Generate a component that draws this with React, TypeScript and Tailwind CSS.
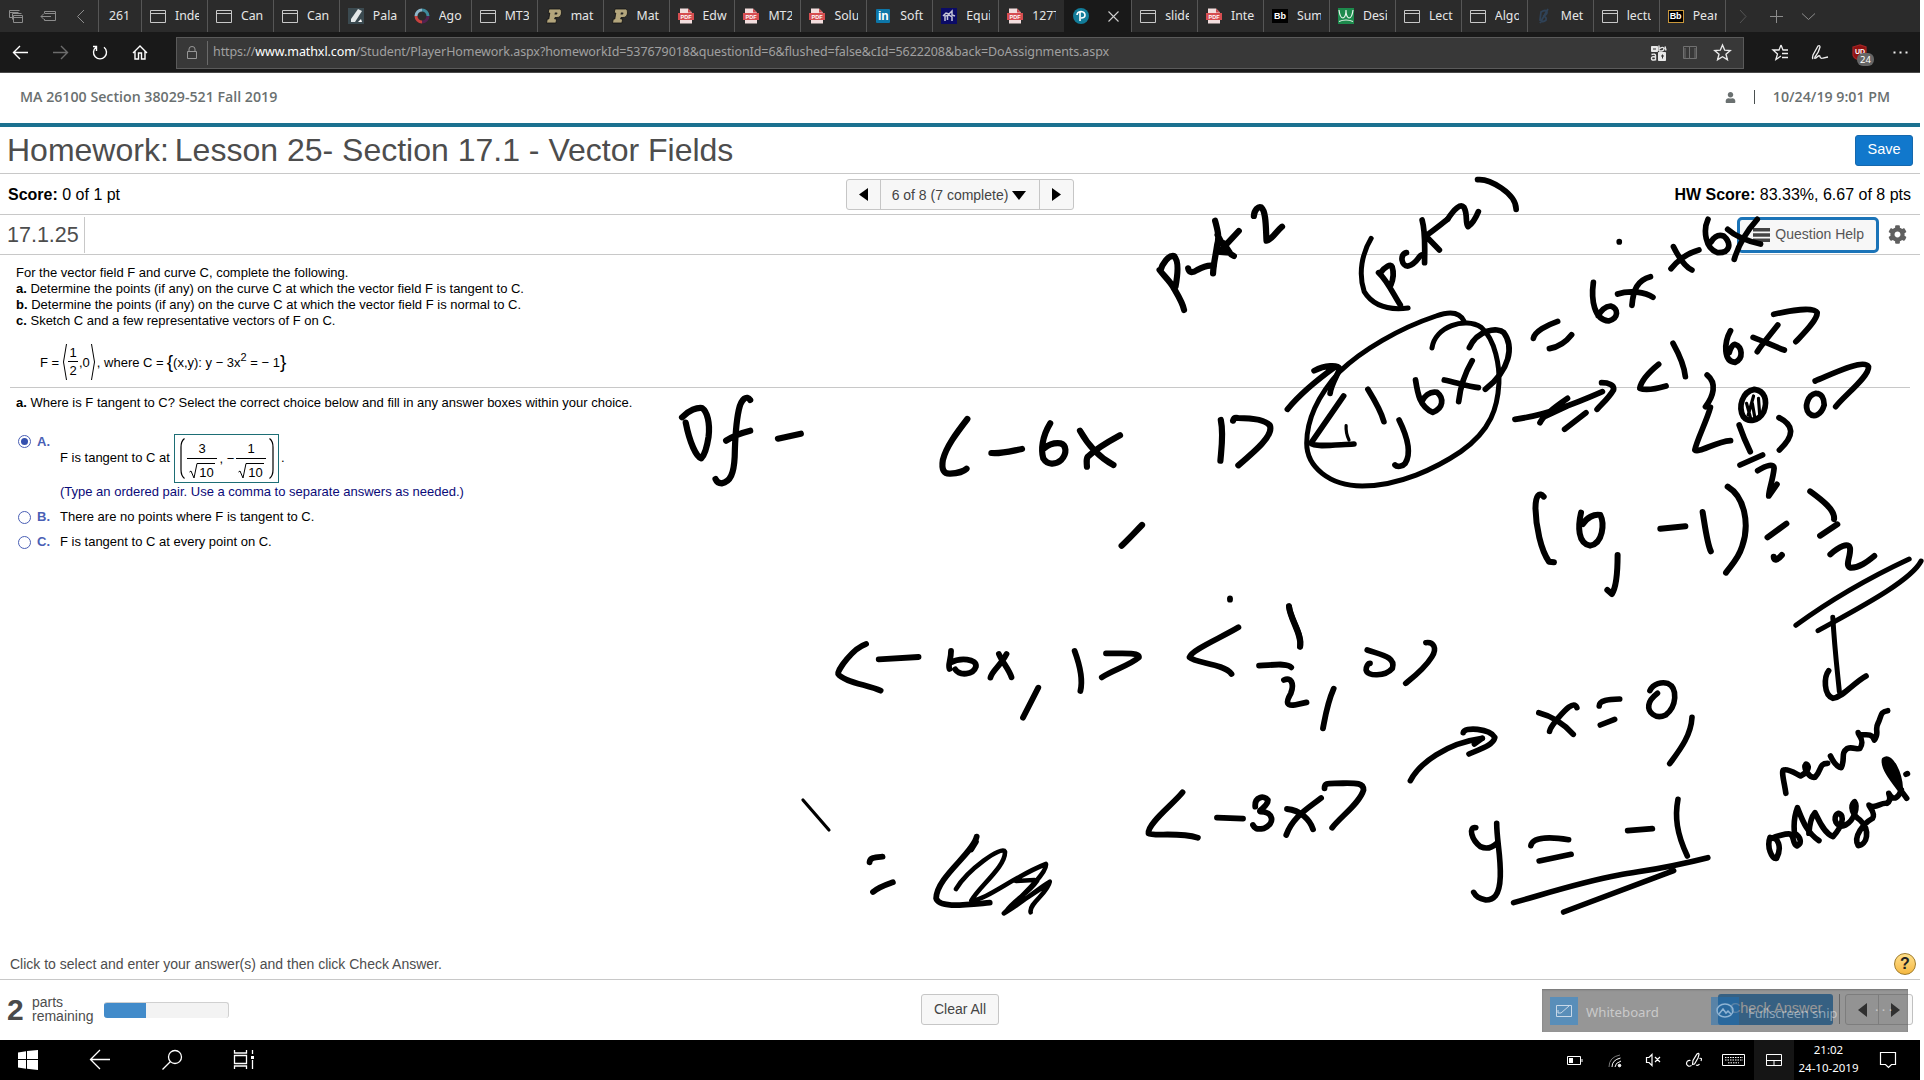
import React from 'react';
import { FaUser, FaCog } from 'react-icons/fa';

type TabIcon = 'page' | 'palette' | 'ring' | 'purdue' | 'pdf' | 'linkedin' | 'horse' | 'bbBlack' | 'green' | 'slash' | 'bbGold';

const tabsBefore: { icon: TabIcon; label: string }[] = [
  { icon: 'page', label: 'Inde' },
  { icon: 'page', label: 'Can' },
  { icon: 'page', label: 'Can' },
  { icon: 'palette', label: 'Pala' },
  { icon: 'ring', label: 'Ago' },
  { icon: 'page', label: 'MT3' },
  { icon: 'purdue', label: 'mat' },
  { icon: 'purdue', label: 'Mat' },
  { icon: 'pdf', label: 'Edw' },
  { icon: 'pdf', label: 'MT2' },
  { icon: 'pdf', label: 'Solu' },
  { icon: 'linkedin', label: 'Soft' },
  { icon: 'horse', label: 'Equi' },
  { icon: 'pdf', label: '127T' },
];

const tabsAfter: { icon: TabIcon; label: string }[] = [
  { icon: 'page', label: 'slide' },
  { icon: 'pdf', label: 'Inter' },
  { icon: 'bbBlack', label: 'Sum' },
  { icon: 'green', label: 'Desi' },
  { icon: 'page', label: 'Lect' },
  { icon: 'page', label: 'Algo' },
  { icon: 'slash', label: 'Met' },
  { icon: 'page', label: 'lectu' },
  { icon: 'bbGold', label: 'Pear' },
];

function Favicon({ kind }: { kind: TabIcon }) {
  switch (kind) {
    case 'page':
      return (
        <svg width="16" height="16" viewBox="0 0 16 16" fill="none" stroke="#c8c8c8">
          <path d="M.5 2.500h15v12h-15zM.5 5.500h15" />
        </svg>
      );
    case 'palette':
      return (
        <svg width="16" height="16" viewBox="0 0 16 16">
          <rect width="16" height="16" fill="#3b4a50" />
          <path d="M3 11 10 1l4 2-7 11H3z" fill="#e4e8e8" />
          <path d="m10 14 3-3 1 3z" fill="#fff" />
        </svg>
      );
    case 'ring':
      return (
        <svg width="16" height="16" viewBox="0 0 16 16" fill="none" strokeWidth="3">
          <path d="M8 2a6 6 0 0 0-6 6" stroke="#8fb6c9" />
          <path d="M8 2a6 6 0 0 1 6 6" stroke="#3e8a9c" />
          <path d="M2 8a6 6 0 0 0 6 6" stroke="#c8423f" />
          <path d="M8 14a6 6 0 0 0 6-6" stroke="#542250" />
        </svg>
      );
    case 'purdue':
      return (
        <svg width="16" height="16" viewBox="0 0 16 16">
          <path d="M3 1h10.500q2.500 0 2 4-.5 4.500-4.500 4.500H9L8.700 11h2l-.8 4H.5l.8-4h1.500L3.800 5H2.200z" fill="#b3a57c" stroke="#111" strokeWidth=".8" />
          <path d="m8.900 4.600-.4 2h1.800q.9 0 1.100-1t-.8-1z" fill="#222" />
        </svg>
      );
    case 'pdf':
      return (
        <svg width="16" height="16" viewBox="0 0 16 16">
          <path d="M2 .5h8l4 4v11H2z" fill="#f3dede" />
          <path d="M10 .5v4h4z" fill="#c9484b" />
          <path d="M0 5h16v7H0z" fill="#d64d50" />
          <text x="8" y="10.600" fontSize="5.500" fontWeight="bold" textAnchor="middle" fill="#fff" fontFamily="Liberation Sans, sans-serif">PDF</text>
        </svg>
      );
    case 'linkedin':
      return (
        <span className="flex h-[14px] w-[14px] items-center justify-center rounded-[1px] bg-[#0d76a8] font-['Liberation_Sans',sans-serif] text-[12px] font-bold leading-none text-white">in</span>
      );
    case 'horse':
      return (
        <svg width="16" height="16" viewBox="0 0 16 16">
          <rect width="16" height="16" fill="#0b0b66" />
          <path d="M2 8 5 5l3 1 3-3v4l3 1M4 13V8l4-1 3 2v4M6.500 8v4" fill="none" stroke="#c5c5d8" strokeWidth="1.500" />
        </svg>
      );
    case 'bbBlack':
      return (
        <span className="flex h-[14px] w-4 items-center justify-center bg-black font-['Liberation_Sans',sans-serif] text-[9px] font-bold leading-none text-white">Bb</span>
      );
    case 'bbGold':
      return (
        <span className="flex h-[13px] w-4 items-center justify-center border border-[#c9973a] bg-black font-['Liberation_Sans',sans-serif] text-[9px] font-bold leading-none text-white">Bb</span>
      );
    case 'green':
      return (
        <svg width="16" height="16" viewBox="0 0 16 16">
          <rect width="16" height="16" fill="#1d8a4c" />
          <path d="M1 2q1 8 4 8 3-1 3-8 0 7 3 8 3 0 4-8M1 13.500q7-3 14 0" fill="none" stroke="#e6f3ea" strokeWidth="1.200" />
        </svg>
      );
    case 'slash':
      return (
        <svg width="16" height="16" viewBox="0 0 16 16" fill="none" stroke="#2f4257" strokeWidth="1.800">
          <path d="M5 4q5-3 6 0 0 3-4 4 4 1 3 4-3 3-6 0zM12 1 4 15" />
        </svg>
      );
  }
}

function Tab({ icon, label }: { icon: TabIcon; label: string }) {
  return (
    <div className="flex h-8 w-[65.950px] shrink-0 items-center border-l border-[#565656] pl-2">
      <span className="flex w-4 shrink-0 justify-center"><Favicon kind={icon} /></span>
      <span className="ml-[9px] w-6 overflow-hidden whitespace-nowrap">{label}</span>
    </div>
  );
}

function TabStrip() {
  return (
    <div className="flex h-8 items-center bg-[#2b2b2b] font-['Noto_Sans',sans-serif] text-[12.300px] text-[#e6e6e6]">
      <svg width="98" height="32" viewBox="0 0 98 32" fill="none" stroke="#8c8c8c" className="shrink-0">
        <path d="M9.500 17.500v-7h10M9.500 12.500h9M12.500 19.500v-6h9M13.500 15.500h9v7h-9zM13.500 17.500h9M9.500 17.500h3" />
        <path d="M44.500 13v-1.500h11v9h-11V19M44.500 13.500h11M41 16.500h10M44 13.500l-3 3 3 3" />
        <path d="m84 10-6.500 6.500L84 23" />
      </svg>
      <div className="flex h-8 w-[43px] shrink-0 items-center border-l border-[#565656] pl-[10px]">261</div>
      {tabsBefore.map((t, i) => <Tab key={i} {...t} />)}
      <div className="flex h-8 w-[67px] shrink-0 items-center bg-[#191919] pl-[9px]">
        <svg width="16" height="16" viewBox="0 0 16 16" className="shrink-0">
          <circle cx="8" cy="8" r="8" fill="#127c99" />
          <path d="M7 13V4.500M4 7q0-3 4-3.500 4 .5 4 3.500t-4 3" fill="none" stroke="#fff" strokeWidth="1.600" />
        </svg>
        <svg width="11" height="11" viewBox="0 0 11 11" className="ml-[19px]" stroke="#d0d0d0" strokeWidth="1.100"><path d="m.5.5 10 10m0-10-10 10" /></svg>
      </div>
      {tabsAfter.map((t, i) => <Tab key={i} {...t} />)}
      <svg width="100" height="32" viewBox="0 0 100 32" fill="none" stroke="#8c8c8c" className="shrink-0">
        <path d="M.5 0v32" stroke="#565656" />
        <path d="m15 10 6 6.500-6 6.500" stroke="#555" />
        <path d="M45 16.500h13M51.500 10v13M77 13.500l6.500 6 6.500-6" />
      </svg>
    </div>
  );
}

function AddressBar() {
  return (
    <div className="flex h-[41px] items-center border-b border-[#4a4a4a] bg-[#191919] font-['Noto_Sans',sans-serif]">
      <svg width="176" height="40" viewBox="0 0 176 40" fill="none" stroke="#fff" strokeWidth="1.400" className="shrink-0">
        <path d="M28 20.500H13.500M20 14l-6.500 6.500L20 27" />
        <path d="M53 20.500h14.500M61 14l6.500 6.500L61 27" stroke="#6c6c6c" />
        <path d="M96 15.300a6.500 6.500 0 1 0 8 0M96.500 19v-4.500H93M103.500 13.500" />
        <path d="m133 21 7-7 7 7M135 19.500V27h3.500v-6h3v6h3.500v-7.500" />
      </svg>
      <div className="mt-px flex h-8 w-[1568px] shrink-0 items-center border border-[#5a5a5a] bg-[#383838]">
        <svg width="12" height="16" viewBox="0 0 12 16" fill="none" stroke="#969696" className="ml-[9px]">
          <path d="M1.500 6.500h9v7h-9zM3 6.500V4q0-2.500 3-2.500T9 4v2.500" />
        </svg>
        <span className="ml-[9px] h-6 w-px bg-[#6a6a6a]" />
        <span className="ml-[5px] whitespace-nowrap text-[12.500px] tracking-[-0.092px] text-[#a0a0a0]">
          https://<span className="text-white">www.mathxl.com</span>/Student/PlayerHomework.aspx?homeworkId=537679018&amp;questionId=6&amp;flushed=false&amp;cId=5622208&amp;back=DoAssignments.aspx
        </span>
        <svg width="84" height="20" viewBox="0 0 84 20" fill="none" stroke="#e8e8e8" className="ml-auto mr-[10px] shrink-0">
          <path d="M2.500 3.500h6v5h-6z" fill="#e8e8e8" />
          <path d="M9.500 9.500h7v8h-7z" fill="#e8e8e8" />
          <path d="M4 6h3M12 13h3M13.500 11.500v4" stroke="#333" />
          <path d="M10 8V2.500M10 6q4-3 5-.5 0 3-5 2.500M16 3.500l1 4" strokeWidth="1.400" />
          <path d="M2.500 11.500q4-1 4 1v5M6.500 14q-4-1-4 1.500 0 2.500 4 1" strokeWidth="1.400" />
          <path d="M34.500 3.500h6v12h-6zM40.500 3.500h7v12h-7zM36 5v10M46 5v10" stroke="#707070" />
          <path d="m73.500 2 2.200 5.200 5.500.4-4.200 3.600 1.400 5.500-4.900-3-4.900 3 1.400-5.500L65.800 7.600l5.500-.4z" strokeWidth="1.400" />
        </svg>
      </div>
      <svg width="176" height="40" viewBox="0 0 176 40" fill="none" stroke="#f0f0f0" strokeWidth="1.300" className="shrink-0">
        <path d="M37 13l-2 5h-6l4.500 4-1.600 5.500L37 24M37 13l2 5h5M38 21.500h6M38 25.500h6" />
        <path d="M69 27q-1-1 0-4l5-9q2-1 2 1-1 5-5 10-1 2 1 1 4-4 4-1 1 2 3 1l5-1" />
        <path d="m109 15 7-2 6 2v8q-1 4-6 5-6-1-7-5z" fill="#8f1212" stroke="#a32525" />
        <text x="116" y="22" fontSize="7" fontWeight="bold" textAnchor="middle" fill="#fff" stroke="none" fontFamily="Liberation Sans, sans-serif">UD</text>
        <rect x="113" y="21" width="17" height="13" rx="6" fill="#666" stroke="none" />
        <text x="121.500" y="31" fontSize="9.500" textAnchor="middle" fill="#fff" stroke="none" fontFamily="Noto Sans, sans-serif">24</text>
        <path d="M149.500 20.500h2M155.500 20.500h2M161.500 20.500h2" strokeWidth="1.800" />
      </svg>
    </div>
  );
}

function Sqrt10() {
  return (
    <span className="flex h-[17px] items-start">
      <svg width="10" height="17" viewBox="0 0 10 17" fill="none" stroke="#000"><path d="m.5 10 1.500-1 3 7L8 1.500h2" /></svg>
      <span className="mt-px border-t border-black pr-px pt-[2px] text-[13px] leading-[14px]">10</span>
    </span>
  );
}

function Paren({ flip, h }: { flip?: boolean; h: number }) {
  return (
    <svg width="5" height={h} viewBox="0 0 5 40" preserveAspectRatio="none" fill="none" stroke="#000" strokeWidth="1.200" className={flip ? '-scale-x-100' : ''}>
      <path d="M4.500.5Q1 3 1 9v22q0 6 3.500 8.500" />
    </svg>
  );
}

function Radio({ on }: { on?: boolean }) {
  return (
    <span className="flex h-[13px] w-[13px] shrink-0 items-center justify-center rounded-full border border-[#4a5fb5] bg-white">
      {on && <span className="h-[7px] w-[7px] rounded-full bg-[#3450ae]" />}
    </span>
  );
}

function Problem() {
  return (
    <div className="h-[691px] pl-4 pt-[10px] text-[13px] leading-4 text-black">
      <div>
        <p>For the vector field F and curve C, complete the following.</p>
        <p><b>a.</b> Determine the points (if any) on the curve C at which the vector field F is tangent to C.</p>
        <p><b>b.</b> Determine the points (if any) on the curve C at which the vector field F is normal to C.</p>
        <p><b>c.</b> Sketch C and a few representative vectors of F on C.</p>
      </div>
      <div className="mt-[14px] flex h-[38px] items-center pl-6">
        <span className="w-[23px] whitespace-nowrap pt-[1px]">F =</span>
        <svg width="4" height="36" viewBox="0 0 4 36" fill="none" stroke="#000"><path d="M3.500 0 .5 18l3 18" /></svg>
        <span className="flex w-[12px] flex-col items-center">
          <span className="leading-[17px]">1</span>
          <span className="h-px w-[10px] bg-black" />
          <span className="leading-[18px]">2</span>
        </span>
        <span className="pt-[1px]">,0</span>
        <svg width="4" height="36" viewBox="0 0 4 36" fill="none" stroke="#000" className="ml-[1px]"><path d="m.5 0 3 18-3 18" /></svg>
        <span className="whitespace-nowrap pl-[2px] pt-[1px]">, where C =</span>
        <span className="pl-[3px] text-[19px]">{'{'}</span>
        <span className="whitespace-nowrap pt-[1px]">(x,y): y − 3x<sup className="relative -top-[6px] text-[11px] leading-none">2</sup> = − 1</span>
        <span className="text-[19px]">{'}'}</span>
      </div>
      <div className="-ml-[6px] mt-[6px] h-px w-[1900px] bg-[#c8c8c8]" />
      <p className="mt-[7px]"><b>a.</b> Where is F tangent to C? Select the correct choice below and fill in any answer boxes within your choice.</p>
      <div className="mt-[23px] flex h-[48px] pl-[2px]">
        <span className="pt-px"><Radio on /></span>
        <span className="w-[29px] pl-[6px] font-bold text-[#4a5fb5]">A.</span>
        <span className="w-[114px] whitespace-nowrap pt-4">F is tangent to C at</span>
        <span className="flex h-[49px] w-[105px] items-center justify-center border-[1.500px] border-[#1d6e75]">
          <Paren h={41} />
          <span className="ml-[2px] flex w-[31px] flex-col items-center">
            <span className="leading-[19px]">3</span>
            <span className="mb-[3px] h-px w-[30px] bg-black" />
            <Sqrt10 />
          </span>
          <span className="w-[18px] whitespace-nowrap pl-[2px]">, −</span>
          <span className="mr-[2px] flex w-[31px] flex-col items-center">
            <span className="leading-[19px]">1</span>
            <span className="mb-[3px] h-px w-[30px] bg-black" />
            <Sqrt10 />
          </span>
          <Paren flip h={41} />
        </span>
        <span className="pl-[2px] pt-4">.</span>
      </div>
      <p className="mt-[2px] pl-[44px] text-[#0a0a78]">(Type an ordered pair. Use a comma to separate answers as needed.)</p>
      <div className="mt-[9px] flex items-center pl-[2px]">
        <Radio />
        <span className="w-[29px] pl-[6px] font-bold text-[#4a5fb5]">B.</span>
        <span>There are no points where F is tangent to C.</span>
      </div>
      <div className="mt-[9px] flex items-center pl-[2px]">
        <Radio />
        <span className="w-[29px] pl-[6px] font-bold text-[#4a5fb5]">C.</span>
        <span>F is tangent to C at every point on C.</span>
      </div>
    </div>
  );
}

/* Pen strokes, grouped by the board area they were drawn in. */
const ink: { frame: string; width: number; strokes: string[] }[] = [
  {
    frame: 'translate(640 130) scale(.40816 .33333)',
    width: 6.2,
    strokes: [
      'M1273 420C1285 440 1300 455 1308 475C1320 500 1330 520 1333 540M1275 422C1280 400 1295 375 1308 378C1320 390 1318 430 1312 470',
      'M1343 415C1345 430 1355 428 1365 420C1380 410 1395 405 1405 408',
      'M1409 272C1415 300 1420 320 1414 345C1410 380 1405 400 1404 430M1467 303L1420 365M1415 315C1425 340 1440 370 1455 378M1430 340L1445 368L1420 366L1432 350',
      'M1504 258C1505 240 1515 228 1522 232C1535 245 1533 300 1535 332C1548 330 1558 305 1573 290',
      'M103 862C120 840 140 832 152 834C165 845 172 880 168 920C163 960 158 975 150 985C138 980 122 940 112 878',
      'M270 810C262 795 248 805 242 840C235 880 233 920 232 980C230 1030 222 1055 200 1060C190 1060 187 1053 185 1047M211 932C225 920 250 908 270 902',
      'M338 926L394 911',
      'M802 867C775 910 750 950 742 990C738 1020 745 1032 760 1031C780 1030 795 1022 800 1016',
      'M861 969C885 972 910 963 936 957',
      'M1005 880C985 920 982 960 988 985C998 1005 1018 1005 1032 990C1047 970 1045 945 1030 940C1010 937 998 947 990 955',
      'M1078 902C1100 950 1130 985 1160 1005M1176 916C1140 940 1110 965 1097 980C1092 990 1095 1000 1095 1010',
      'M1423 870C1430 910 1425 950 1422 992',
      'M1453 872C1455 862 1458 862 1465 864C1500 864 1530 868 1543 886C1553 915 1510 960 1466 1006',
      'M1230 1185C1210 1210 1195 1230 1180 1247',
    ],
  },
  {
    frame: 'translate(1280 120) scale(.41071 .33333)',
    width: 5.700,
    strokes: [
      'M240 458C260 480 275 520 293 555M245 458C255 440 270 430 273 440C278 460 275 480 270 495',
      'M308 398C290 402 296 440 312 438C335 430 335 410 345 405',
      'M346 300C355 340 352 390 352 428M408 298C390 315 375 330 358 345M358 352C368 365 380 380 388 390',
      'M408 298C425 265 440 250 448 262C458 285 450 310 458 320C470 310 478 290 483 275',
      'M481 179C510 175 575 220 575 268',
      'M826 365L826 366',
      'M763 487C757 540 765 600 800 603C825 595 825 565 805 558C790 560 780 575 775 588',
      'M822 522C850 510 890 515 908 532M902 470C870 480 860 510 857 556',
      'M958 380C970 410 985 440 1003 450M1020 390C990 400 965 425 952 446',
      'M1042 298C1030 330 1035 385 1065 398C1097 400 1100 370 1080 348C1065 342 1055 355 1050 365',
      'M1090 328C1110 350 1145 365 1170 372M1162 298C1135 335 1115 380 1106 418',
      'M617 655C620 635 650 615 676 604M656 686C680 680 700 660 710 644',
      'M461 683C480 630 530 620 545 638C570 680 560 750 500 808',
      'M18 868C50 820 90 780 135 740M83 752C110 735 140 733 145 745C145 755 125 790 122 820',
      'M155 828L75 970C85 982 130 975 180 972',
      'M214 808C230 840 245 870 253 905',
      'M290 900C310 950 320 1000 305 1030C298 1040 285 1042 280 1035',
      'M330 780C335 820 340 860 372 877C398 865 400 835 382 817C365 812 350 830 345 845',
      'M400 780C430 788 460 800 483 803M468 722C450 760 438 810 435 845',
      'M572 898C650 885 720 850 785 815M783 788C800 788 815 795 812 810C800 835 785 850 772 868M633 908C640 890 670 860 700 835M640 892L700 858M693 928L745 878',
      'M922 733C905 750 880 780 876 805C890 812 920 805 940 798',
      'M957 670C975 710 985 745 987 770',
      'M1040 765C1065 790 1055 830 1036 860M1048 862C1040 900 1015 960 1010 990C1020 1000 1060 965 1097 962',
      'M1097 632C1080 670 1080 725 1108 727C1130 715 1125 680 1108 673C1100 675 1095 690 1094 698',
      'M1152 652C1180 665 1205 680 1228 690M1212 615C1190 650 1175 670 1162 695',
      'M1202 583C1240 572 1300 560 1308 578C1308 600 1275 640 1256 665',
      'M1303 783C1340 765 1420 715 1433 740C1435 770 1370 830 1353 860',
      'M1155 808C1125 815 1115 860 1128 890C1140 908 1165 905 1178 875C1188 840 1180 812 1155 808',
      'M1118 915C1125 940 1135 970 1145 995M1120 1035L1175 1005M1163 1052C1185 1035 1203 1030 1203 1045C1200 1080 1190 1110 1190 1128L1210 1093',
      'M1215 893C1250 915 1255 945 1216 990',
      'M1305 820C1285 825 1275 860 1288 880C1300 895 1318 885 1325 855C1325 835 1318 820 1305 820',
    ],
  },
  {
    frame: 'translate(1280 120) scale(.41071 .33333)',
    width: 5,
    strokes: [
      'M222 355C200 400 190 460 205 515C225 555 260 572 312 564',
      'M370 684C378 620 450 590 490 622C525 660 535 740 533 790C530 860 515 930 440 995C380 1045 290 1098 200 1098C120 1098 65 1040 65 970C65 900 90 830 145 755C200 690 290 625 380 588C415 572 438 577 448 603',
    ],
  },
  {
    frame: 'translate(1280 120) scale(.41071 .33333)',
    width: 3.2,
    strokes: ['M161 917C160 935 164 950 168 960', 'M1153 828L1140 885M1136 850L1146 895M1165 835L1168 885M1150 850L1156 892'],
  },
  {
    frame: 'translate(1280 380) scale(.41071 .33333)',
    width: 6,
    strokes: [
      'M642 350C632 335 622 345 622 385C623 440 635 510 655 545L667 547',
      'M733 398C725 440 725 490 755 497C787 490 790 430 780 405C765 400 745 415 738 432',
      'M822 525C822 570 820 620 808 642L797 630',
      'M926 446L987 439M1029 396C1035 440 1040 490 1049 514',
      'M1090 320C1130 350 1145 430 1125 500C1115 540 1095 560 1086 578',
      'M1187 472L1233 431M1202 530C1202 545 1212 540 1222 525',
      'M1291 334C1320 360 1352 390 1349 418M1315 467L1357 433',
      'M1340 523C1360 500 1385 485 1388 505C1390 530 1375 555 1388 563C1410 565 1430 545 1447 528',
      'M22 680C25 720 55 765 49 800',
    ],
  },
  {
    frame: 'translate(1280 380) scale(.41071 .33333)',
    width: 5,
    strokes: ['M1256 736C1340 660 1440 590 1532 537M1310 752C1400 690 1535 605 1561 543', 'M1346 712C1350 800 1355 850 1362 935'],
  },
  {
    frame: 'translate(780 570) scale(.38265 .33333)',
    width: 5.800,
    strokes: [
      'M225 222C190 235 150 300 152 312C165 335 230 345 263 362',
      'M258 268L362 261',
      'M447 243C447 270 438 285 443 297M445 278C470 262 515 265 512 290C505 315 470 318 458 298',
      'M572 252C580 275 600 300 605 322M592 252C575 290 555 300 550 323',
      'M675 353L635 443',
      'M770 243C785 290 792 330 785 363',
      'M852 250C890 252 940 245 938 262C915 285 870 300 841 322',
      'M1176 85L1176 89',
      'M1198 172C1150 205 1075 240 1070 262C1085 280 1160 280 1180 312',
      'M1252 287C1290 285 1325 278 1336 292',
      'M1317 330C1335 320 1345 340 1335 370C1320 400 1325 408 1345 405L1376 397',
      'M1330 108C1335 150 1365 190 1359 230',
      'M1447 356C1430 400 1425 440 1419 475',
      'M234 877C235 862 250 862 268 860M243 966C260 950 275 945 295 937',
      'M514 800C505 850 410 920 408 985C415 1015 480 1005 548 998M512 815L500 838',
      'M1052 667C1030 700 960 760 963 790C975 800 1040 785 1092 803',
      'M1142 743L1210 746',
      'M1242 710C1240 680 1265 675 1275 690C1275 710 1250 720 1255 725C1290 725 1295 760 1265 775C1245 780 1240 775 1236 765',
      'M1325 717C1360 720 1385 750 1393 778M1414 684C1380 715 1340 740 1323 795',
      'M1423 655C1423 640 1430 640 1450 640C1500 640 1525 635 1525 660C1515 700 1465 740 1443 773',
    ],
  },
  {
    frame: 'translate(780 570) scale(.38265 .33333)',
    width: 4.600,
    strokes: ['M460 957C490 900 580 825 588 845C590 890 520 950 500 992C540 990 610 920 695 882C700 910 620 990 585 1030C620 1010 680 950 705 935C700 970 650 1000 655 1027M617 933L665 930M590 1025C610 990 650 970 672 932M600 1018L690 950'],
  },
  { frame: 'translate(780 570) scale(.38265 .33333)', width: 3.200, strokes: ['M60 690L128 780'] },
  {
    frame: 'translate(1360 640) scale(.35969 .33333)',
    width: 5.600,
    strokes: [
      'M20 30C60 45 100 50 90 85C70 110 20 110 17 90C17 80 22 70 28 70',
      'M183 8C205 5 215 25 200 50C180 85 150 110 127 130',
      'M287 278C290 260 360 265 375 292C370 315 340 325 303 342M340 295L318 312',
      'M497 218C540 230 570 255 593 283M603 203C595 180 570 210 550 235C540 250 530 260 527 274',
      'M665 198C665 180 690 178 722 177M668 255L708 238',
      'M806 152C815 130 840 125 855 130C885 145 880 200 850 225C820 240 800 215 803 195C805 180 815 170 827 160',
      'M923 232C920 290 885 335 861 371',
      'M322 563C300 560 310 600 335 620C355 630 370 620 380 610M380 550C380 600 392 650 390 710C388 770 370 780 350 780C330 775 322 770 316 757',
      'M475 617C480 590 530 590 580 599M498 663L587 643',
      'M744 572L813 566M884 478C875 530 880 580 910 648',
      'M427 788C550 750 620 725 720 705C800 690 850 685 967 653M566 816C680 770 780 730 872 692',
      'M140 422C165 370 240 310 340 295',
      'M1303 92C1290 110 1288 165 1315 175C1345 170 1370 130 1407 108',
      'M1184 460C1180 430 1170 390 1178 390C1190 385 1210 400 1225 408C1240 400 1255 380 1240 372C1230 385 1250 415 1265 412C1285 390 1275 370 1300 370',
      'M1308 348C1320 375 1330 382 1338 383C1350 355 1335 340 1355 325C1370 320 1385 330 1390 325C1405 300 1385 285 1385 278C1390 295 1420 270 1430 300C1445 280 1430 270 1440 250C1450 230 1445 215 1467 212',
      'M1140 592C1130 620 1145 660 1158 655C1175 620 1160 590 1145 595C1155 590 1185 580 1195 582C1210 590 1200 610 1215 618C1230 610 1225 590 1208 580C1205 550 1210 520 1216 503C1230 540 1240 575 1276 602',
      'M1248 580C1250 550 1255 530 1265 518C1275 540 1290 580 1315 590C1340 560 1350 525 1330 520C1310 530 1325 570 1350 555C1375 540 1385 500 1375 485C1360 500 1370 525 1390 540C1420 570 1410 615 1385 617C1370 590 1400 550 1425 535C1435 520 1415 500 1415 495C1430 510 1450 485 1465 490C1480 480 1470 465 1470 460C1485 490 1500 465 1505 450',
      'M1520 475C1490 430 1455 390 1458 360C1475 345 1500 400 1502 445M1468 368L1490 410',
      'M1518 403L1522 401',
    ],
  },
];

function InkLayer() {
  return (
    <svg className="pointer-events-none absolute left-0 top-0" width="1924" height="1040" viewBox="0 0 1924 1040" fill="none" stroke="#000" strokeLinecap="round" strokeLinejoin="round">
      {ink.map((g, i) => (
        <g key={i} transform={g.frame} strokeWidth={g.width}>
          {g.strokes.map((d, j) => <path key={j} d={d} vectorEffect="non-scaling-stroke" />)}
        </g>
      ))}
    </svg>
  );
}

function Footer() {
  return (
    <div className="flex h-[61px] border-t border-[#c8c8c8] pt-[14px]">
      <span className="w-[25px] pl-[7px] text-[30px] font-bold leading-[31px] text-[#4a4a4a]">2</span>
      <span className="w-[72px] pl-[7px] pt-[1px] text-[14px] leading-[14px] text-[#4d4d4d]">parts<br />remaining</span>
      <span className="ml-[7px] mt-2 flex h-4 w-[125px] overflow-hidden rounded-[3px] border-r border-t border-[#d0d0d0] bg-[#f3f3f3]">
        <span className="-mt-px h-4 w-[42px] bg-[#428bca]" />
      </span>
      <button className="ml-[692px] h-[31px] w-[78px] rounded-[3px] border border-[#c6c6c6] bg-[#f7f7f7] text-[14px] text-[#444]">Clear All</button>
      <span className="ml-[719px] flex h-[31px] w-[115px] items-start justify-center rounded-[3px] bg-[#1178cc] pl-px pt-[4px] text-[14.500px] text-white">Check Answer</span>
      <span className="ml-[6px] mr-[5px] h-[30px] w-px bg-[#888]" />
      <span className="flex h-[31px] w-[68px] rounded-[3px] border border-[#c0c0c0] bg-[#f7f7f7]">
        <span className="flex w-[33px] items-center justify-center border-r border-[#c0c0c0]">
          <svg width="9" height="14"><path d="M9 0v14L0 7z" /></svg>
        </span>
        <span className="flex flex-1 items-center justify-center">
          <svg width="9" height="14"><path d="M0 0v14l9-7z" /></svg>
        </span>
      </span>
    </div>
  );
}

function SnipToast() {
  return (
    <div className="absolute left-[1542px] top-[989px] flex h-[43px] w-[366px] items-center bg-[#505050]/60 pl-2 font-['Noto_Sans',sans-serif] text-[13px] text-white/50 shadow-[inset_0_1px_2px_#777]">
      <span className="flex h-7 w-7 items-center justify-center bg-[#3f8ac8]/70">
        <svg width="16" height="12" viewBox="0 0 16 12" fill="none" stroke="#c8d8e8"><path d="M.5.500h15v11H.5zM2 5v3h3l8-7" /></svg>
      </span>
      <span className="w-[133px] pl-[8px] pt-[5px] text-[13.200px]">Whiteboard</span>
      <span className="flex h-7 w-7 items-center justify-center bg-[#1b6fb8]/50">
        <svg width="18" height="15" viewBox="0 0 18 15" fill="none" stroke="#8fb4d4" strokeWidth="1.500"><ellipse cx="9" cy="7.500" rx="8" ry="6.500" /><path d="m3 11 4-5 3 4 2-2 3 3" /></svg>
      </span>
      <span className="w-[130px] whitespace-nowrap pl-[9px] pt-[6px] text-[12.800px] text-white/45">Fullscreen snip</span>
      <span className="pl-[6px]">· · ·</span>
    </div>
  );
}

function Taskbar() {
  return (
    <div className="flex h-10 w-[1920px] bg-black">
      <svg width="270" height="40" viewBox="0 0 270 40" fill="none" stroke="#fff" strokeWidth="1.300">
        <path d="M18 12.500l8-1.200V19h-8zM27 11.100 38 10v9H27zM18 20h8v8.700l-8-1.200zM27 20h11v10l-11-1.200z" fill="#fff" stroke="none" />
        <path d="M110 19.500H91M100 10l-9.500 9.500L100 29" />
        <circle cx="175" cy="17" r="6.500" /><path d="m170.500 21.500-8 8" />
        <path d="M234.500 10v3h12v-3M234.500 29v-3h12v3M234.500 15.500h12v8h-12zM252.500 10v4M252.500 20v9" />
        <path d="M251 16h3v3h-3z" fill="#fff" stroke="none" />
      </svg>
      <svg width="484" height="40" viewBox="1270 0 484 40" fill="none" stroke="#fff" className="ml-[1000px] shrink-0">
        <path d="M1567.500 16.500h13v8h-13zM1582 19v3" /><path d="M1569 18h4v5h-4z" fill="#fff" stroke="none" />
        <path d="M1609 27q0-10 11-12" stroke="#777" /><path d="M1612 27q0-7 8.500-9M1615 27q0-4 6-6" /><circle cx="1619.500" cy="25.500" r="1.300" fill="#fff" />
        <path d="M1646.500 17.500h2.500l3-3v11l-3-3h-2.500zM1655 17l5 5m0-5-5 5" strokeWidth="1.200" />
        <path d="M1690.500 20.500q-4-.5-4 3.500 1.500 3.500 5 1.500M1692.500 24.500l.5-4 4-6.500q2-1.500 2 .5l-1 3.500-3.500 6zM1696 25q2 1 3.500-1M1699.500 18.500q3-1 1.500 2.500" strokeWidth="1.200" />
        <path d="M1722.500 14.500h22v11h-22z" /><path d="M1725 17.500h18M1725 20h18M1728 22.800h11" strokeDasharray="1.500 1" />
      </svg>
      <span className="flex h-10 w-10 items-center justify-center bg-[#151515]">
        <svg width="16" height="12" viewBox="0 0 16 12" fill="none" stroke="#fff"><path d="M.5.500h15v11H.5zM.5 6.500h15M8 6.500v5" /></svg>
      </span>
      <span className="w-[69px] whitespace-nowrap pt-px text-center font-['Noto_Sans',sans-serif] text-[11.500px] leading-[18px] text-white">21:02<br />24-10-2019</span>
      <svg width="50" height="40" viewBox="1863 0 50 40" fill="none" stroke="#fff" strokeWidth="1.200"><path d="M1880.500 12.500h15v12h-4l-3 3-3-3h-5z" /></svg>
    </div>
  );
}

export default function App() {
  return (
    <div className="relative h-[1080px] w-[1924px] overflow-hidden bg-white font-['Liberation_Sans',Arial,sans-serif]">
      <div className="flex w-[1920px] flex-col overflow-hidden">
        <TabStrip />
        <AddressBar />
        <header className="flex h-[54px] items-center border-b-4 border-[#1b7190] pb-[2px] pl-5 pr-[30px] font-['Open_Sans',sans-serif] text-[14.200px] font-semibold text-[#6a7070]">
          <span>MA 26100 Section 38029-521 Fall 2019</span>
          <FaUser size={11} className="ml-auto" />
          <span className="mx-[18px] h-[14px] w-px bg-[#4a5050]" />
          <span>10/24/19 9:01 PM</span>
        </header>
        <div className="flex h-[47px] items-center justify-between border-b border-[#c8c8c8] pl-[7px] pr-[7px]">
          <h1 className="flex gap-[6px] whitespace-nowrap text-[32px] text-[#4d4d4d]"><span>Homework:</span><span>Lesson 25- Section 17.1 - Vector Fields</span></h1>
          <button className="h-[31px] w-[58px] rounded-[3px] border border-[#1668ad] bg-[#1178cc] text-[14.500px] text-white">Save</button>
        </div>
        <div className="flex h-[41px] items-center border-b border-[#c8c8c8] pl-2 pr-[9px] pt-[2px] text-[16px] text-black">
          <span className="w-[838px]"><b>Score:</b> 0 of 1 pt</span>
          <span className="-mt-px flex h-[31px] w-[228px] items-center rounded-[3px] border border-[#c6c6c6] bg-[#f7f7f7] text-[14px] text-[#444]">
            <span className="flex w-[34px] justify-center border-r border-[#c6c6c6] py-2"><svg width="9" height="13"><path d="M9 0v13L0 6.500z" /></svg></span>
            <span className="flex h-full flex-1 items-center justify-center gap-[4px] whitespace-nowrap pr-[2px] pt-px">6 of 8 (7 complete)<svg width="14" height="9"><path d="M0 0h14L7 9z" /></svg></span>
            <span className="flex w-[34px] justify-center border-l border-[#c6c6c6] py-2 pr-px"><svg width="9" height="13"><path d="M0 0v13l9-6.500z" /></svg></span>
          </span>
          <span className="ml-auto"><b>HW Score:</b> 83.33%, 6.67 of 8 pts</span>
        </div>
        <div className="flex h-10 items-center border-b border-[#c8c8c8] pr-[13px] text-[21.500px] text-[#4d4d4d]">
          <span className="flex h-9 w-[85px] items-center border-r border-[#c8c8c8] pl-[7px] pt-[2px]">17.1.25</span>
          <button className="ml-auto flex h-9 w-[142px] items-center justify-end gap-[5px] rounded-[5px] border-[3px] border-[#1b74b8] bg-[#f7f7f7] pr-[12px] text-[14px] text-[#555]">
            <svg width="17" height="14" fill="#444"><path d="M0 0h17v3.500H0zM0 5.300h17v3.500H0zM0 10.600h17V14H0z" /></svg>
            Question Help
          </button>
          <FaCog size={19} className="ml-[9px]" color="#5f5f5f" />
        </div>
        <Problem />
        <div className="flex h-[33px] items-center pl-[10px] pr-1 pt-[4px] text-[14px] text-[#4d4d4d]">
          <span>Click to select and enter your answer(s) and then click Check Answer.</span>
          <span className="-mt-px ml-auto flex h-[22px] w-[22px] items-center justify-center rounded-full border border-[#a07c2c] bg-gradient-to-b from-[#ffe08a] to-[#f5b840] text-[16px] font-bold text-[#222]">?</span>
        </div>
        <Footer />
        <Taskbar />
      </div>
      <SnipToast />
      <InkLayer />
    </div>
  );
}
